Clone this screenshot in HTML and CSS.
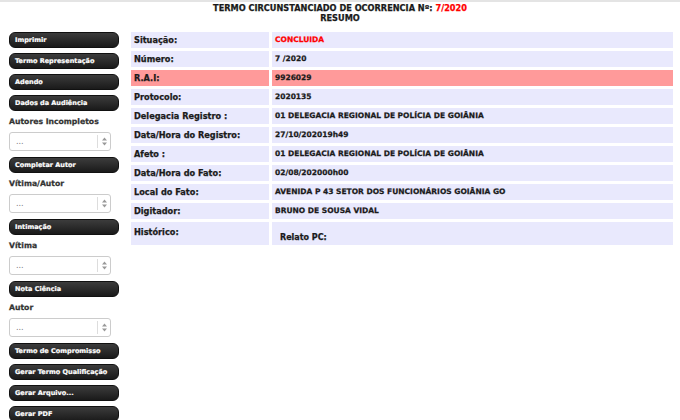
FILE: index.html
```html
<!DOCTYPE html>
<html lang="pt">
<head>
<meta charset="utf-8">
<link rel="stylesheet" href="styles.css">
</head>
<body>
<div class="topline"></div>
<header class="header">
  <div>TERMO CIRCUNSTANCIADO DE OCORRENCIA Nº: <span class="red">7/2020</span></div>
  <div>RESUMO</div>
</header>
<main class="main">
  <aside class="side">
    <button class="btn">Imprimir</button>
    <button class="btn">Termo Representação</button>
    <button class="btn">Adendo</button>
    <button class="btn">Dados da Audiência</button>
    <div class="lbl">Autores Incompletos</div>
    <div class="spin"><span class="dots">...</span><span class="arrows"><svg width="7" height="11" viewBox="0 0 7 11"><path d="M1 4.5 L3.5 1.5 L6 4.5Z M1 6.5 L3.5 9.5 L6 6.5Z" fill="#999"/></svg></span></div>
    <button class="btn">Completar Autor</button>
    <div class="lbl">Vítima/Autor</div>
    <div class="spin"><span class="dots">...</span><span class="arrows"><svg width="7" height="11" viewBox="0 0 7 11"><path d="M1 4.5 L3.5 1.5 L6 4.5Z M1 6.5 L3.5 9.5 L6 6.5Z" fill="#999"/></svg></span></div>
    <button class="btn">Intimação</button>
    <div class="lbl">Vítima</div>
    <div class="spin"><span class="dots">...</span><span class="arrows"><svg width="7" height="11" viewBox="0 0 7 11"><path d="M1 4.5 L3.5 1.5 L6 4.5Z M1 6.5 L3.5 9.5 L6 6.5Z" fill="#999"/></svg></span></div>
    <button class="btn">Nota Ciência</button>
    <div class="lbl">Autor</div>
    <div class="spin"><span class="dots">...</span><span class="arrows"><svg width="7" height="11" viewBox="0 0 7 11"><path d="M1 4.5 L3.5 1.5 L6 4.5Z M1 6.5 L3.5 9.5 L6 6.5Z" fill="#999"/></svg></span></div>
    <button class="btn">Termo de Compromisso</button>
    <button class="btn">Gerar Termo Qualificação</button>
    <button class="btn">Gerar Arquivo...</button>
    <button class="btn">Gerar PDF</button>
  </aside>
  <table class="info">
    <tr><td class="k">Situação:</td><td class="v red">CONCLUIDA</td></tr>
    <tr><td class="k">Número:</td><td class="v">7 /2020</td></tr>
    <tr class="hl"><td class="k">R.A.I:</td><td class="v">9926029</td></tr>
    <tr><td class="k">Protocolo:</td><td class="v">2020135</td></tr>
    <tr><td class="k">Delegacia Registro :</td><td class="v">01 DELEGACIA REGIONAL DE POLÍCIA DE GOIÂNIA</td></tr>
    <tr><td class="k">Data/Hora do Registro:</td><td class="v">27/10/202019h49</td></tr>
    <tr><td class="k">Afeto :</td><td class="v">01 DELEGACIA REGIONAL DE POLÍCIA DE GOIÂNIA</td></tr>
    <tr><td class="k">Data/Hora do Fato:</td><td class="v">02/08/202000h00</td></tr>
    <tr><td class="k">Local do Fato:</td><td class="v">AVENIDA P 43 SETOR DOS FUNCIONÁRIOS GOIÂNIA GO</td></tr>
    <tr><td class="k">Digitador:</td><td class="v">BRUNO DE SOUSA VIDAL</td></tr>
    <tr class="hist"><td class="k">Histórico:</td><td class="v"><div class="relato">Relato PC:</div></td></tr>
  </table>
</main>
</body>
</html>
```
FILE: styles.css
```css
* { box-sizing: border-box; }
body {
  margin: 0;
  font-family: "DejaVu Sans", Verdana, sans-serif;
  font-weight: bold;
  font-size: 8px;
  color: #1a1a1a;
  background: #fff;
  overflow: hidden;
  -webkit-text-stroke: 0.25px currentColor;
}
.topline { height: 2px; background: #e4e4e4; }
.header {
  text-align: center;
  font-size: 8.2px;
  line-height: 10px;
  padding-top: 1px;
  height: 30px;
}
.red { color: #f00; }
.main { display: flex; align-items: flex-start; }
.side {
  width: 110px;
  margin-left: 9px;
  display: flex;
  flex-direction: column;
}
.btn {
  display: block;
  width: 110px;
  height: 16px;
  margin: 0 0 5px 0;
  padding: 0 0 0 5px;
  border: 1px solid #111;
  border-radius: 6px;
  background: linear-gradient(#3c3c3c, #1a1a1a);
  color: #fff;
  font-family: "DejaVu Sans", Verdana, sans-serif;
  font-weight: bold;
  font-size: 6.5px;
  text-align: left;
  line-height: 14px;
  -webkit-text-stroke: 0.2px #fff;
}
.lbl {
  height: 22px;
  line-height: 22px;
  font-size: 7.7px;
  color: #333;
  margin-top: -6px;
  padding-top: 1px;
}
.spin {
  width: 102px;
  height: 19px;
  border: 1px solid #ccc;
  border-radius: 3px;
  display: flex;
  align-items: center;
  justify-content: space-between;
  margin-bottom: 6px;
  background: #fff;
}
.dots {
  font-weight: normal;
  color: #777;
  font-size: 8px;
  padding-left: 6px;
  line-height: 10px;
  -webkit-text-stroke: 0;
}
.arrows {
  height: 13px;
  width: 13px;
  border-left: 1px solid #ddd;
  display: flex;
  align-items: center;
  justify-content: center;
}
.info {
  margin-left: 9px;
  border-spacing: 3px 3.5px;
  margin-top: -3.5px;
  width: 548px;
}
.info td {
  background: #e9e9fd;
  height: 16px;
  padding: 0 0 0 3px;
  vertical-align: middle;
  line-height: 10px;
}
.info td.k { width: 138px; font-size: 8.2px; }
.info td.v { font-size: 7.5px; }
.info .hl td { background: #ff9a9a; }
.info .hist td { height: 23px; vertical-align: top; padding-top: 5px; }
.relato { padding-top: 6px; padding-left: 5px; font-size: 8px; }
```
